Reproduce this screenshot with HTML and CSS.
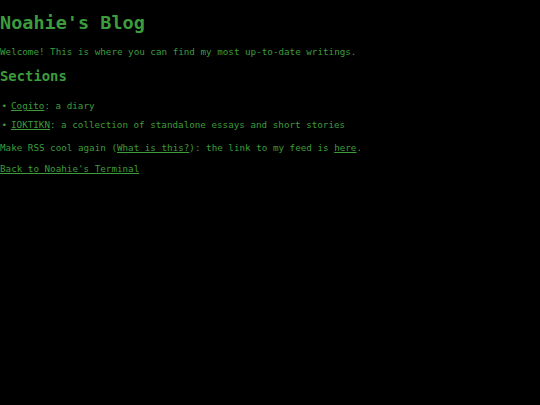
FILE: index.html
```html
<!DOCTYPE html>
<html>
<head>
<meta charset="utf-8">
<title>Noahie's Blog</title>
<link rel="stylesheet" href="styles.css">
</head>
<body>
<h1 class="title">Noahie's Blog</h1>
<p class="text">Welcome! This is where you can find my most up-to-date writings.</p>
<h2 class="heading">Sections</h2>
<ul class="sections">
<li class="item"><a class="link" href="#">Cogito</a>: a diary</li>
<li class="item"><a class="link" href="#">IOKTIKN</a>: a collection of standalone essays and short stories</li>
</ul>
<p class="text">Make RSS cool again (<a class="link" href="#">What is this?</a>): the link to my feed is <a class="link" href="#">here</a>.</p>
<p class="text back"><a class="link" href="#">Back to Noahie's Terminal</a></p>
</body>
</html>
```
FILE: styles.css
```css
html, body {
  background: #000;
}
body {
  margin: 0;
  font-family: "DejaVu Sans Mono", monospace;
  font-size: 9.25px;
  color: #3c9c3c;
}
.title {
  font-size: 2em;
  margin: 0.67em 0;
  font-weight: bold;
}
.heading {
  font-size: 1.5em;
  margin: 0.83em 0;
  font-weight: bold;
}
.text {
  margin: 1em 0;
}
.back {
  margin-top: 10px;
}
.sections {
  margin: 15.5px 0 12px;
  padding: 0;
  list-style: none;
}
.item {
  margin: 0 0 8.5px;
}
.item::before {
  content: "\2022";
  display: inline-block;
  box-sizing: border-box;
  width: 11px;
  padding-left: 1.5px;
}
.link {
  color: #3c9c3c;
  text-decoration: underline;
}
```
